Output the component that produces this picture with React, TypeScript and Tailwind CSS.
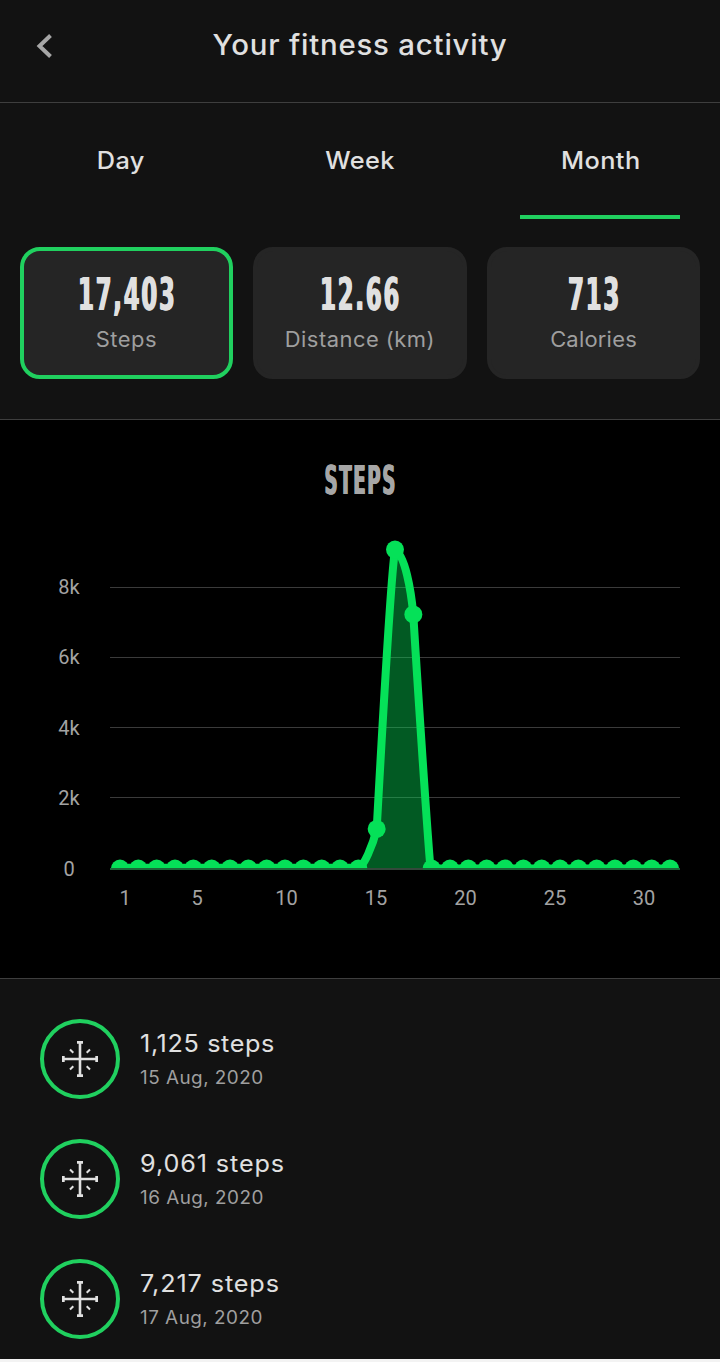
import React from "react";

type Stat = {
  label: string;
  value: string;
  active?: boolean;
  labelClass: string;
};

type Activity = {
  steps: string;
  date: string;
  stepsClass: string;
};

const TABS = [
  { label: "Day", active: false },
  { label: "Week", active: false },
  { label: "Month", active: true },
];

const STATS: Stat[] = [
  {
    label: "Steps",
    value: "17,403",
    active: true,
    labelClass: "tracking-[0.5px]",
  },
  {
    label: "Distance (km)",
    value: "12.66",
    labelClass: "tracking-[0.45px]",
  },
  {
    label: "Calories",
    value: "713",
    labelClass: "tracking-[0.2px]",
  },
];

const ACTIVITIES: Activity[] = [
  { steps: "1,125 steps", date: "15 Aug, 2020", stepsClass: "tracking-[0.6px]" },
  { steps: "9,061 steps", date: "16 Aug, 2020", stepsClass: "tracking-[0.85px]" },
  { steps: "7,217 steps", date: "17 Aug, 2020", stepsClass: "tracking-[0.85px]" },
];

// chart geometry
const BASE_Y = 348.5;
const PX_PER_STEP = 70.4 / 2000;
const DAYS: number[] = Array.from({ length: 31 }, () => 0);
DAYS[14] = 1125;
DAYS[15] = 9061;
DAYS[16] = 7217;

const POINTS = DAYS.map((value, i) => ({
  x: 120 + (i * 550) / 30,
  y: BASE_Y - value * PX_PER_STEP,
}));

const LINE =
  "M120 347.8H358.3C363.3 347.8 373 325 376.7 309C379.5 258 391 55 395 30C405 35 411 70 413.3 94.5C416 140 427 310 430.5 348.5H670";

const Y_LABELS = [
  { label: "8k", y: 67 },
  { label: "6k", y: 137.4 },
  { label: "4k", y: 207.8 },
  { label: "2k", y: 277.8 },
  { label: "0", y: 348.8 },
];

const X_LABELS = [
  { label: "1", x: 125 },
  { label: "5", x: 197 },
  { label: "10", x: 286.5 },
  { label: "15", x: 376 },
  { label: "20", x: 465.5 },
  { label: "25", x: 555 },
  { label: "30", x: 644 },
];

const StepsChart = () => (
  <svg width="720" height="418" viewBox="0 0 720 418" className="block">
    <defs>
      <clipPath id="plot">
        <rect x="110" y="0" width="570" height="348" />
      </clipPath>
    </defs>
    {Y_LABELS.slice(0, 4).map((item) => (
      <rect
        key={item.label}
        x="110"
        y={Math.floor(item.y)}
        width="570"
        height="1"
        fill="#3b3b3b"
      />
    ))}
    <g clipPath="url(#plot)">
      <path d={`${LINE} Z`} fill="#05e158" fillOpacity="0.4" />
      <path
        d={LINE}
        fill="none"
        stroke="#05e158"
        strokeWidth="8"
        strokeLinejoin="round"
      />
      {POINTS.map((point, i) => (
        <circle key={i} cx={point.x} cy={point.y} r="9" fill="#05e158" />
      ))}
    </g>
    <rect x="110" y="348" width="570" height="2" fill="#1b6638" />
    <rect x="367" y="348" width="56" height="2" fill="#34493b" />
    <g fill="#a3a3a3" fontFamily="Roboto, sans-serif" fontSize="20">
      {Y_LABELS.map((item) => (
        <text key={item.label} x="69" y={item.y + 6.8} textAnchor="middle">
          {item.label}
        </text>
      ))}
      {X_LABELS.map((item) => (
        <text key={item.label} x={item.x} y="385" textAnchor="middle">
          {item.label}
        </text>
      ))}
    </g>
  </svg>
);

const StepIcon = () => (
  <svg width="36" height="36" viewBox="0 0 36 36" fill="none" stroke="#e0e0e0">
    <path d="M18 1V35M1 18H35" strokeWidth="2.6" />
    <path d="M15 1.4H21M15 34.6H21M1.3 15V21M34.7 15V21" strokeWidth="2.8" />
    <path
      d="M8 8.5L11.3 11.8M28 8.5L24.7 11.8M8 28.5L11.3 25.2M28 28.5L24.7 25.2"
      strokeWidth="2"
    />
  </svg>
);

const App = () => {
  return (
    <div className="flex h-[1362px] w-[720px] flex-col overflow-hidden bg-[#f3f3f3] font-['Inter',sans-serif] text-[#e0e0e0]">
      <header className="grid h-[103px] shrink-0 grid-cols-[90px_1fr_90px] border-b border-[#3e3e3e] bg-[#121212] pb-[11px]">
        <button className="flex items-center pl-9" aria-label="Back">
          <svg width="18" height="26" viewBox="0 0 18 26" fill="none">
            <path d="M14.5 2.5L3.5 13L14.5 23.5" stroke="#a6a6a6" strokeWidth="4" />
          </svg>
        </button>
        <h1 className="flex scale-x-[1.05] items-center justify-center whitespace-nowrap pb-0.5 text-[28px] font-medium tracking-[0.75px]">
          Your fitness activity
        </h1>
      </header>

      <nav className="flex h-[116px] shrink-0 justify-between bg-[#121212] px-10">
        {TABS.map((tab) => (
          <button
            key={tab.label}
            className={`flex w-40 items-center justify-center border-b-4 pt-[3px] pl-px text-2xl font-medium tracking-[0.4px] ${
              tab.active ? "border-[#20d05f]" : "border-transparent"
            }`}
          >
            <span className="scale-x-[1.055]">{tab.label}</span>
          </button>
        ))}
      </nav>

      <section className="grid h-[201px] shrink-0 grid-cols-3 gap-5 border-b border-[#3e3e3e] bg-[#121212] px-5 pt-7 pb-10">
        {STATS.map((stat) => (
          <div
            key={stat.label}
            className={`flex flex-col items-center rounded-[20px] border-4 bg-[#252525] pt-[18px] ${
              stat.active ? "border-[#20d05f]" : "border-[#252525]"
            }`}
          >
            <div className="h-[52px] scale-x-[0.56] whitespace-nowrap pl-[3px] font-['DejaVu_Sans_Condensed','DejaVu_Sans',sans-serif] text-[45px] leading-[51px] font-bold tracking-[3.3px] [text-shadow:1px_0_currentColor,-1px_0_currentColor]">
              {stat.value}
            </div>
            <div
              className={`mt-[3px] scale-x-[1.045] text-[21px] leading-8 whitespace-nowrap text-[#9f9f9f] ${stat.labelClass}`}
            >
              {stat.label}
            </div>
          </div>
        ))}
      </section>

      <section className="flex h-[559px] shrink-0 flex-col border-b border-[#3e3e3e] bg-black">
        <h2 className="mt-10 flex h-10 scale-x-[0.52] items-center justify-center pt-0.5 pl-[3px] font-['DejaVu_Sans_Condensed','DejaVu_Sans',sans-serif] text-[39px] font-bold tracking-[3px] text-[#a6a6a6] [text-shadow:1px_0_currentColor,-1px_0_currentColor]">
          STEPS
        </h2>
        <div className="mt-5">
          <StepsChart />
        </div>
      </section>

      <ul className="flex h-[380px] shrink-0 flex-col gap-10 bg-[#121212] px-10 pt-10">
        {ACTIVITIES.map((activity) => (
          <li key={activity.date} className="flex h-20 shrink-0 gap-5">
            <div className="flex size-20 items-center justify-center rounded-full border-4 border-[#20d05f]">
              <StepIcon />
            </div>
            <div className="flex origin-left scale-x-[1.05] flex-col whitespace-nowrap pt-[9px]">
              <span className={`text-2xl leading-8 ${activity.stepsClass}`}>
                {activity.steps}
              </span>
              <span className="mt-0.5 text-[18px] leading-8 tracking-[0.45px] text-[#9f9f9f]">
                {activity.date}
              </span>
            </div>
          </li>
        ))}
      </ul>
    </div>
  );
};

export default App;
